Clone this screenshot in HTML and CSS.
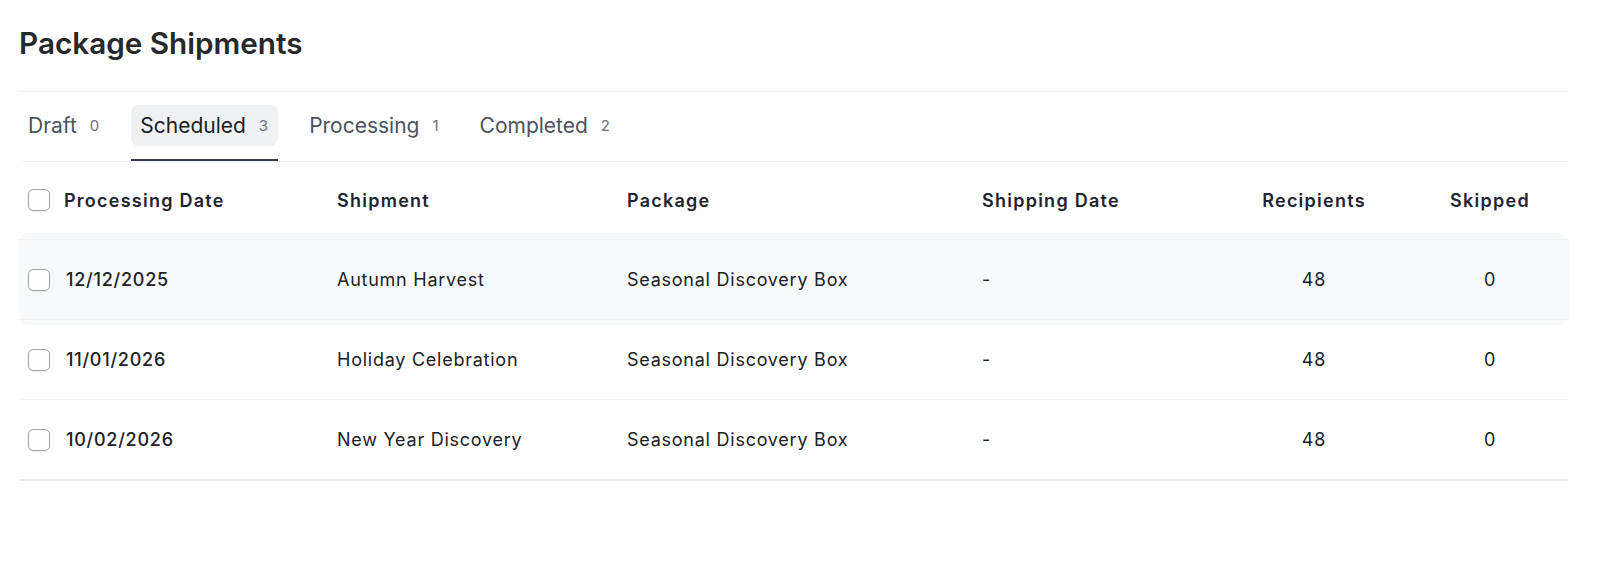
FILE: index.html
```html
<!DOCTYPE html>
<html lang="en">
<head>
  <meta charset="UTF-8" />
  <meta name="viewport" content="width=device-width, initial-scale=1" />
  <title>Package Shipments</title>
  <link rel="stylesheet" href="styles.css">
</head>
<body>
  <div class="page">
    <h1>Package Shipments</h1>

    <div class="tabs">
      <div class="tab"><span class="tab-inner">Draft <span class="count">0</span></span></div>
      <div class="tab active"><span class="tab-inner">Scheduled <span class="count">3</span></span></div>
      <div class="tab"><span class="tab-inner">Processing <span class="count">1</span></span></div>
      <div class="tab"><span class="tab-inner">Completed <span class="count">2</span></span></div>
    </div>

    <div class="table">
      <div class="row head">
        <div class="cell first"><span class="check"></span>Processing Date</div>
        <div class="cell">Shipment</div>
        <div class="cell">Package</div>
        <div class="cell">Shipping Date</div>
        <div class="cell center">Recipients</div>
        <div class="cell center">Skipped</div>
      </div>
      <div id="rows"></div>
    </div>
  </div>

  <script>
    const shipments = [
      { date: '12/12/2025', name: 'Autumn Harvest', pkg: 'Seasonal Discovery Box', ship: '-', recipients: 48, skipped: 0 },
      { date: '11/01/2026', name: 'Holiday Celebration', pkg: 'Seasonal Discovery Box', ship: '-', recipients: 48, skipped: 0 },
      { date: '10/02/2026', name: 'New Year Discovery', pkg: 'Seasonal Discovery Box', ship: '-', recipients: 48, skipped: 0 },
    ];

    // table rows
    const rowsDiv = document.getElementById('rows');
    shipments.forEach((s, i) => {
      const row = document.createElement('div');
      row.classList.add('row');
      if(i === 0) row.classList.add('hover');
      row.innerHTML = `
        <div class="cell first"><span class="check"></span><span class="date">${s.date}</span></div>
        <div class="cell">${s.name}</div>
        <div class="cell">${s.pkg}</div>
        <div class="cell">${s.ship}</div>
        <div class="cell center">${s.recipients}</div>
        <div class="cell center">${s.skipped}</div>`;
      rowsDiv.appendChild(row);
    });
  </script>
</body>
</html>
```

FILE: styles.css
```css
body {
  font-family: Inter, "Noto Sans", sans-serif;
  background: #fff;
  color: #1c2027;
  margin: 0;
}
.page {
  padding: 24px 32px 40px 19px;
}
h1 {
  margin: 0 0 29px;
  font-size: 29.7px;
  line-height: 38px;
  font-weight: 600;
  color: #27282c;
}
.tabs {
  display: flex;
  gap: 22px;
  border-top: 1px solid #f1f2f4;
  border-bottom: 1px solid #f1f2f4;
}
.tab {
  padding: 13px 0;
  border-bottom: 2px solid transparent;
}
.tab.active {
  border-bottom-color: #353b4a;
}
.tab-inner {
  display: flex;
  align-items: center;
  gap: 13px;
  height: 41px;
  padding: 0 10px 1px 9px;
  box-sizing: border-box;
  border-radius: 8px;
  font-size: 21px;
  color: #4b5262;
}
.tab.active .tab-inner {
  background: #f0f1f3;
  color: #1c2027;
}
.count {
  font-size: 15px;
  color: #6b7180;
}
.table {
  position: relative;
  z-index: 0;
}
.row {
  display: grid;
  grid-template-columns: 318px 290px 355px 234px 196px 156px;
  align-items: center;
  height: 80px;
  box-sizing: border-box;
  border-bottom: 1px solid #f1f2f4;
  font-size: 18px;
  letter-spacing: 0.75px;
}
.row.head {
  height: 78px;
  padding-bottom: 1px;
  font-weight: 600;
  letter-spacing: 1.25px;
  color: #1f2430;
}
.row:last-child {
  border-bottom: 2px solid #eceef1;
  height: 81px;
}
.row.hover {
  position: relative;
}
.row.hover::before {
  content: "";
  position: absolute;
  top: -7px;
  bottom: -6px;
  left: 0;
  right: -1px;
  background: #f8f9fa;
  border-radius: 10px;
  z-index: -1;
}
.cell.first {
  display: flex;
  align-items: center;
  gap: 16px;
  padding-left: 9px;
}
.head .cell.first {
  gap: 14px;
}
.date {
  font-weight: 500;
}
.center {
  text-align: center;
}
.check {
  width: 20px;
  height: 20px;
  border: 1.5px solid #9ea3ae;
  border-radius: 5px;
  background: #fff;
  box-shadow: 0 1px 2px rgba(0,0,0,0.06);
  flex-shrink: 0;
}
```
